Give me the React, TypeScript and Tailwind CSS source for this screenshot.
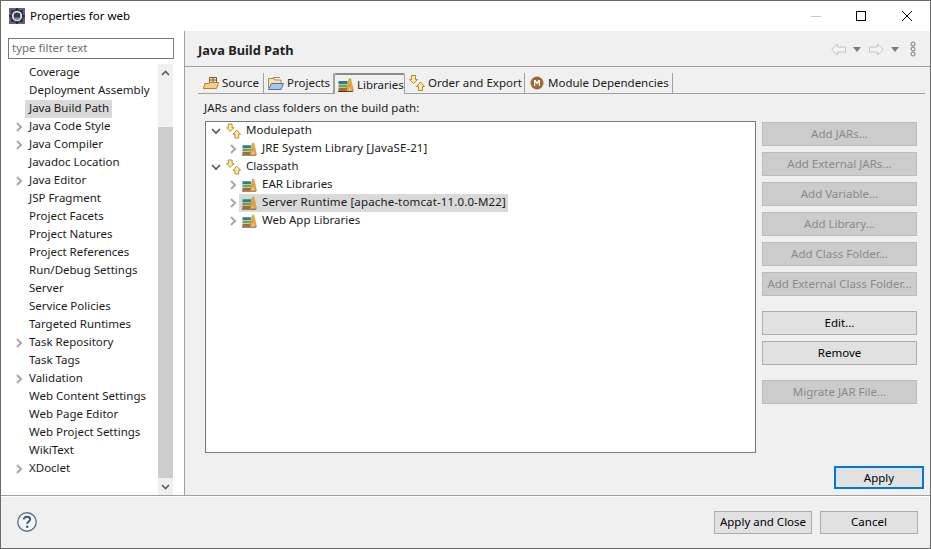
import React from "react";

const font = "font-['Noto_Sans','Open_Sans',sans-serif]";

const Chevron = ({ open = false, className = "" }: { open?: boolean; className?: string }) => (
  <svg width="10" height="10" viewBox="0 0 10 10" className={className}>
    {open ? (
      <path d="M1 3 L5 7 L9 3" fill="none" stroke="#555" strokeWidth="1.7" />
    ) : (
      <path d="M3 1 L7 5 L3 9" fill="none" stroke="#a8a8a8" strokeWidth="2" />
    )}
  </svg>
);

const LibIcon = () => (
  <svg width="16" height="16" viewBox="0 0 16 16">
    <rect x="0.5" y="4" width="9" height="3" fill="#2a7f8f" />
    <rect x="0.5" y="7.5" width="9" height="3" fill="#6aa84f" />
    <rect x="0.5" y="11" width="9" height="3" fill="#b3652c" />
    <path d="M0 14.5H15" stroke="#4a3a20" strokeWidth="1" />
    <path d="M8.5 14 L11 2 L12.5 1.5 L15.5 14 L13 14 L11.6 7.5 L10.5 14Z" fill="#f0a93a" stroke="#c08422" strokeWidth="0.6" />
  </svg>
);

const PathIcon = () => (
  <svg width="16" height="16" viewBox="0 0 16 16">
    <path d="M2.5 0.5H6.5V4.5H8.5L4.5 8.5 0.5 4.5H2.5Z" fill="#fbe9a8" stroke="#b58a2a" strokeWidth="1" />
    <path d="M9.5 15.5V11.5H7.5L11.5 7 15.5 11.5H13.5V15.5Z" fill="#fbe9a8" stroke="#b58a2a" strokeWidth="1" />
  </svg>
);

const SourceIcon = () => (
  <svg width="16" height="16" viewBox="0 0 16 16">
    <path d="M6.5 8V2.5H13.5V8" fill="#f5e6c4" stroke="#7a5a28" strokeWidth="1" />
    <path d="M10 2V8M6.5 5H13.5" stroke="#7a5a28" strokeWidth="1" />
    <path d="M0.5 13.5 L2 8.5H6L7 7.5H15.5L13.5 13.5Z" fill="#f5cf8a" stroke="#b08238" strokeWidth="1" />
  </svg>
);

const ProjectsIcon = () => (
  <svg width="16" height="16" viewBox="0 0 16 16">
    <path d="M0.5 13V3.5H6L7 5H13V8" fill="#f7e3b0" stroke="#a98a4a" strokeWidth="1" />
    <path d="M0.5 14.5 L3.5 8.5H15.5L13 14.5Z" fill="#a9c7ea" stroke="#4f74a8" strokeWidth="1" />
    <path d="M5 2.5H12" stroke="#a98a4a" strokeWidth="1" />
  </svg>
);

const ModuleIcon = () => (
  <svg width="14" height="14" viewBox="0 0 14 14">
    <circle cx="7" cy="7" r="6.5" fill="#9c6a32" />
    <path d="M4 10V4H5.5L7 6 8.5 4H10V10H8.8V6.2L7 8.5 5.2 6.2V10Z" fill="#fff" />
  </svg>
);

const GearIcon = () => (
  <svg width="16" height="16" viewBox="0 0 16 16">
    <rect x="0" y="0" width="16" height="16" fill="#6a5a98" />
    <circle cx="8" cy="8" r="6.8" fill="#33333c" />
    <circle cx="8" cy="8" r="5.2" fill="#e2e2e8" />
    <circle cx="8" cy="8" r="3.4" fill="#3a3a48" />
    <path d="M4.8 9.5H11.2V10A3.4 3.4 0 0 1 4.8 10Z" fill="#8a8a98" />
    <path d="M8 0V2.5M8 13.5V16M0 8H2.5M13.5 8H16M2.3 2.3L4 4M12 12L13.7 13.7M13.7 2.3L12 4M4 12L2.3 13.7" stroke="#26262e" strokeWidth="1.6" />
  </svg>
);

const NavArrow = ({ flip = false }: { flip?: boolean }) => (
  <svg width="15" height="13" viewBox="0 0 15 13" className={flip ? "-scale-x-100" : ""}>
    <path d="M0.7 6.5 L6.5 1 V4 H14.5 V9 H6.5 V12Z" fill="#f4f4f4" stroke="#c4c4c4" strokeWidth="1" />
  </svg>
);

const Caret = () => (
  <svg width="8" height="5" viewBox="0 0 8 5" className="block">
    <path d="M0 0H8L4 5Z" fill="#7a7a7a" />
  </svg>
);

const navItems: [string, boolean, boolean?][] = [
  ["Coverage", false],
  ["Deployment Assembly", false],
  ["Java Build Path", false, true],
  ["Java Code Style", true],
  ["Java Compiler", true],
  ["Javadoc Location", false],
  ["Java Editor", true],
  ["JSP Fragment", false],
  ["Project Facets", false],
  ["Project Natures", false],
  ["Project References", false],
  ["Run/Debug Settings", false],
  ["Server", false],
  ["Service Policies", false],
  ["Targeted Runtimes", false],
  ["Task Repository", true],
  ["Task Tags", false],
  ["Validation", true],
  ["Web Content Settings", false],
  ["Web Page Editor", false],
  ["Web Project Settings", false],
  ["WikiText", false],
  ["XDoclet", true],
];

const Tab = ({
  icon,
  label,
  w,
  pl = "pl-[4px]",
  active = false,
}: {
  icon: React.ReactNode;
  label: string;
  w: string;
  pl?: string;
  active?: boolean;
}) => (
  <div
    className={`flex items-center gap-[3px] whitespace-nowrap border-r border-[#a0a0a0] ${pl} ${w} ${
      active
        ? "relative z-10 -mb-px h-[21px] rounded-t-[2px] border-t-[2px] border-l border-t-[#8a8a8a] border-l-[#a0a0a0] bg-[#f0f0f0]"
        : "h-[20px]"
    }`}
  >
    <span className="flex w-[16px] justify-center">{icon}</span>
    <span>{label}</span>
  </div>
);

const TreeRow = ({
  child = false,
  open,
  icon,
  label,
  labelClass = "",
  selected = false,
}: {
  child?: boolean;
  open: boolean;
  icon: React.ReactNode;
  label: string;
  labelClass?: string;
  selected?: boolean;
}) => (
  <div className={`flex h-[18px] items-center ${child ? "pl-[17px]" : ""}`}>
    <Chevron open={open} className="mr-px shrink-0" />
    <div className={`flex h-[18px] items-center ${selected ? "bg-[#d9d9d9] pr-[2px]" : ""}`}>
      <span className={`mr-[5px] flex w-[15px] items-center ${child ? "ml-[3px]" : "ml-[4px]"}`}>{icon}</span>
      <span className={`h-[18px] ${labelClass}`}>{label}</span>
    </div>
  </div>
);

const Btn = ({
  label,
  disabled = false,
  className = "h-[24px] pb-px",
}: {
  label: string;
  disabled?: boolean;
  className?: string;
}) => (
  <div
    className={`flex items-center justify-center whitespace-nowrap border ${
      disabled ? "border-[#bcbcbc] bg-[#cccccc] text-[#8a8a8a]" : "border-[#adadad] bg-[#e1e1e1] text-black"
    } ${className}`}
  >
    {label}
  </div>
);

export default function App() {
  return (
    <div
      className={`flex h-[549px] w-[931px] flex-col overflow-hidden border border-[#6a6a6a] bg-[#f0f0f0] text-[11.5px] leading-[16px] text-[#1a1a1a] ${font}`}
    >
      {/* Title bar */}
      <div className="flex h-[30px] shrink-0 items-center bg-white pl-[8px]">
        <GearIcon />
        <span className="ml-[5px] text-black">Properties for web</span>
        <div className="ml-auto flex items-center">
          <div className="flex w-[45px] justify-center">
            <div className="h-px w-[10px] bg-[#c8c8c8]" />
          </div>
          <div className="flex w-[46px] justify-center">
            <div className="h-[10px] w-[10px] border border-black" />
          </div>
          <div className="flex w-[46px] justify-center">
            <svg width="10" height="10" viewBox="0 0 10 10">
              <path d="M0 0L10 10M10 0L0 10" stroke="#000" strokeWidth="1" />
            </svg>
          </div>
        </div>
      </div>

      {/* Main */}
      <div className="flex min-h-0 flex-1">
        {/* Left */}
        <div className="flex w-[184px] shrink-0 flex-col border-r border-[#a0a0a0] bg-white">
          <div className="mt-[7px] ml-[7px] flex h-[21px] w-[166px] items-center border border-[#7a7a7a] pb-px pl-[3px] text-[#6d6d6d]">
            type filter text
          </div>
          <div className="mt-[5px] flex min-h-0 flex-1">
            <div className="w-[157px] shrink-0">
              {navItems.map(([label, chev, sel]) => (
                <div key={label} className="flex h-[18px] items-center">
                  <span className="ml-[13px] flex w-[11px] items-center">{chev && <Chevron />}</span>
                  <span className={`h-[18px] pr-[3px] pl-[4px] ${sel ? "bg-[#d9d9d9]" : ""}`}>{label}</span>
                </div>
              ))}
            </div>
            <div className="flex w-[15px] shrink-0 flex-col bg-[#f0f0f0]">
              <div className="flex h-[17px] items-center justify-center">
                <svg width="9" height="6" viewBox="0 0 9 6">
                  <path d="M1 5L4.5 1.5 8 5" fill="none" stroke="#5a5a5a" strokeWidth="1.6" />
                </svg>
              </div>
              <div className="mt-[46px] h-[351px] bg-[#cdcdcd]" />
              <div className="flex flex-1 items-center justify-center">
                <svg width="9" height="6" viewBox="0 0 9 6">
                  <path d="M1 1L4.5 4.5 8 1" fill="none" stroke="#5a5a5a" strokeWidth="1.6" />
                </svg>
              </div>
            </div>
          </div>
        </div>

        {/* Right */}
        <div className="flex min-w-0 flex-1 flex-col">
          <div className="flex h-[36px] shrink-0 items-center border-b border-[#a0a0a0] pr-[14px] pl-[13px]">
            <span className="pt-[2px] text-[12.8px] font-bold text-[#222]">Java Build Path</span>
            <div className="ml-auto flex items-center pt-px">
              <NavArrow />
              <span className="mr-[8px] ml-[7px]">
                <Caret />
              </span>
              <NavArrow flip />
              <span className="mr-[11px] ml-[7px]">
                <Caret />
              </span>
              <svg width="6" height="16" viewBox="0 0 6 16">
                <circle cx="3" cy="3" r="2" fill="none" stroke="#777" />
                <circle cx="3" cy="8" r="2" fill="none" stroke="#777" />
                <circle cx="3" cy="13" r="2" fill="none" stroke="#777" />
              </svg>
            </div>
          </div>

          <div className="flex min-h-0 flex-1 flex-col pr-[5px] pl-[13px]">
            {/* Tabs */}
            <div className="mt-[6px] flex h-[21px] shrink-0 items-end border-b border-[#a0a0a0]">
              <Tab w="w-[66px]" pl="pl-[5px]" icon={<SourceIcon />} label="Source" />
              <Tab w="w-[70px]" icon={<ProjectsIcon />} label="Projects" />
              <Tab w="w-[71px]" pl="pl-[3px]" icon={<LibIcon />} label="Libraries" active />
              <Tab w="w-[120px]" icon={<PathIcon />} label="Order and Export" />
              <Tab w="w-[148px]" icon={<ModuleIcon />} label="Module Dependencies" />
            </div>

            <div className="mt-[5px] ml-[6px] h-[18px] leading-[18px]">JARs and class folders on the build path:</div>

            <div className="mt-[4px] flex min-h-0 flex-1 flex-col pl-[7px]">
              <div className="flex">
                {/* Tree */}
                <div className="h-[332px] w-[551px] shrink-0 border border-[#7a7a7a] bg-white pl-[5px]">
                  <TreeRow open icon={<PathIcon />} label="Modulepath" />
                  <TreeRow
                    child
                    open={false}
                    icon={<LibIcon />}
                    label="JRE System Library [JavaSE-21]"
                    labelClass="tracking-[0.1px]"
                  />
                  <TreeRow open icon={<PathIcon />} label="Classpath" />
                  <TreeRow child open={false} icon={<LibIcon />} label="EAR Libraries" />
                  <TreeRow
                    child
                    open={false}
                    icon={<LibIcon />}
                    label="Server Runtime [apache-tomcat-11.0.0-M22]"
                    labelClass="tracking-[0.14px]"
                    selected
                  />
                  <TreeRow child open={false} icon={<LibIcon />} label="Web App Libraries" />
                </div>
                {/* Side buttons */}
                <div className="ml-[6px] flex w-[155px] shrink-0 flex-col pt-px">
                  <div className="flex flex-col gap-[6px]">
                    <Btn disabled label="Add JARs..." />
                    <Btn disabled label="Add External JARs..." />
                    <Btn disabled label="Add Variable..." />
                    <Btn disabled label="Add Library..." />
                    <Btn disabled label="Add Class Folder..." />
                    <Btn disabled label="Add External Class Folder..." />
                  </div>
                  <div className="mt-[15px] flex flex-col gap-[6px]">
                    <Btn label="Edit..." />
                    <Btn label="Remove" />
                  </div>
                  <Btn disabled label="Migrate JAR File..." className="mt-[15px] h-[24px] pb-px" />
                </div>
              </div>
              <div className="mt-[13px] flex justify-end pr-[1px]">
                <div className="flex h-[23px] w-[90px] items-center justify-center border-[2px] border-[#0078d7] bg-[#e1e1e1] text-black">
                  Apply
                </div>
              </div>
            </div>
          </div>
        </div>
      </div>

      {/* Footer */}
      <div className="flex h-[53px] shrink-0 items-center border-t border-[#a0a0a0] bg-[#f0f0f0] pr-[12px] pl-[16px] shadow-[inset_0_1px_0_#ffffff]">
        <svg width="20" height="20" viewBox="0 0 20 20">
          <circle cx="10" cy="10" r="9.2" fill="#f4f6fa" stroke="#5e7191" strokeWidth="1.4" />
          <path d="M6.8 7.5C6.8 5.6 8.2 4.7 10 4.7C11.9 4.7 13.2 5.7 13.2 7.3C13.2 9.6 10.2 9.6 10.2 12" fill="none" stroke="#3f5578" strokeWidth="1.9" />
          <circle cx="10.2" cy="14.8" r="1.2" fill="#3f5578" />
        </svg>
        <Btn label="Apply and Close" className="ml-auto h-[23px] w-[98px]" />
        <Btn label="Cancel" className="ml-[8px] h-[23px] w-[98px]" />
      </div>
    </div>
  );
}
